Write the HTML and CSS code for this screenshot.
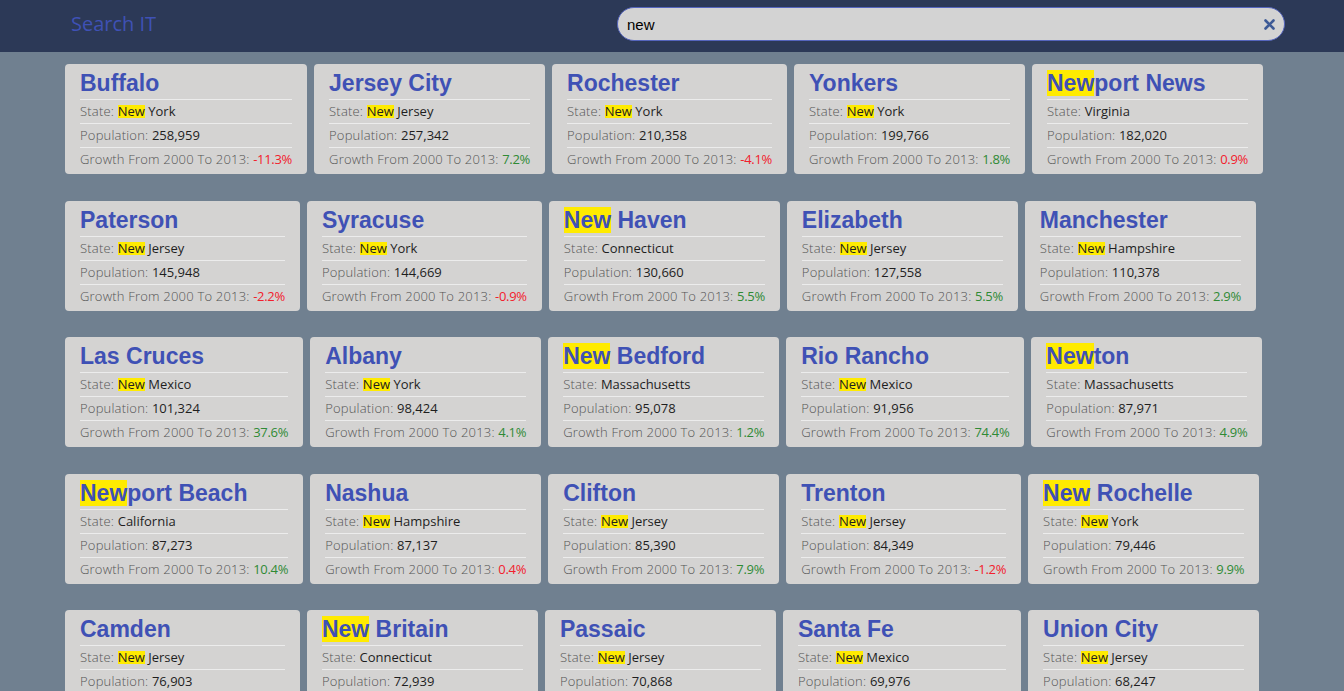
FILE: index.html
```html
<!DOCTYPE html>
<html lang="en">
<head>
<meta charset="utf-8">
<title>Search IT</title>
<link rel="stylesheet" href="styles.css">
</head>
<body>
<header class="topbar">
  <div class="brand">Search IT</div>
  <div class="search">
    <input type="text" value="new" autofocus>
    <button class="clear" type="button" aria-label="Clear">
      <svg width="11" height="11" viewBox="0 0 11 11"><path d="M1.5 1.5 L9.5 9.5 M9.5 1.5 L1.5 9.5" stroke="#3d5a96" stroke-width="2.6" stroke-linecap="round" fill="none"/></svg>
    </button>
  </div>
</header>
<main class="results">
  <div class="card"><h2>Buffalo</h2><div class="row"><span class="label">State: </span><span class="val"><mark class="hl">New</mark> York</span></div><div class="row"><span class="label">Population: </span><span class="val">258,959</span></div><div class="row"><span class="label">Growth From 2000 To 2013: </span><span class="neg">-11.3%</span></div></div>
  <div class="card"><h2>Jersey City</h2><div class="row"><span class="label">State: </span><span class="val"><mark class="hl">New</mark> Jersey</span></div><div class="row"><span class="label">Population: </span><span class="val">257,342</span></div><div class="row"><span class="label">Growth From 2000 To 2013: </span><span class="pos">7.2%</span></div></div>
  <div class="card"><h2>Rochester</h2><div class="row"><span class="label">State: </span><span class="val"><mark class="hl">New</mark> York</span></div><div class="row"><span class="label">Population: </span><span class="val">210,358</span></div><div class="row"><span class="label">Growth From 2000 To 2013: </span><span class="neg">-4.1%</span></div></div>
  <div class="card"><h2>Yonkers</h2><div class="row"><span class="label">State: </span><span class="val"><mark class="hl">New</mark> York</span></div><div class="row"><span class="label">Population: </span><span class="val">199,766</span></div><div class="row"><span class="label">Growth From 2000 To 2013: </span><span class="pos">1.8%</span></div></div>
  <div class="card"><h2><mark class="hh">New</mark>port News</h2><div class="row"><span class="label">State: </span><span class="val">Virginia</span></div><div class="row"><span class="label">Population: </span><span class="val">182,020</span></div><div class="row"><span class="label">Growth From 2000 To 2013: </span><span class="neg">0.9%</span></div></div>

  <div class="card"><h2>Paterson</h2><div class="row"><span class="label">State: </span><span class="val"><mark class="hl">New</mark> Jersey</span></div><div class="row"><span class="label">Population: </span><span class="val">145,948</span></div><div class="row"><span class="label">Growth From 2000 To 2013: </span><span class="neg">-2.2%</span></div></div>
  <div class="card"><h2>Syracuse</h2><div class="row"><span class="label">State: </span><span class="val"><mark class="hl">New</mark> York</span></div><div class="row"><span class="label">Population: </span><span class="val">144,669</span></div><div class="row"><span class="label">Growth From 2000 To 2013: </span><span class="neg">-0.9%</span></div></div>
  <div class="card"><h2><mark class="hh">New</mark> Haven</h2><div class="row"><span class="label">State: </span><span class="val">Connecticut</span></div><div class="row"><span class="label">Population: </span><span class="val">130,660</span></div><div class="row"><span class="label">Growth From 2000 To 2013: </span><span class="pos">5.5%</span></div></div>
  <div class="card"><h2>Elizabeth</h2><div class="row"><span class="label">State: </span><span class="val"><mark class="hl">New</mark> Jersey</span></div><div class="row"><span class="label">Population: </span><span class="val">127,558</span></div><div class="row"><span class="label">Growth From 2000 To 2013: </span><span class="pos">5.5%</span></div></div>
  <div class="card"><h2>Manchester</h2><div class="row"><span class="label">State: </span><span class="val"><mark class="hl">New</mark> Hampshire</span></div><div class="row"><span class="label">Population: </span><span class="val">110,378</span></div><div class="row"><span class="label">Growth From 2000 To 2013: </span><span class="pos">2.9%</span></div></div>

  <div class="card"><h2>Las Cruces</h2><div class="row"><span class="label">State: </span><span class="val"><mark class="hl">New</mark> Mexico</span></div><div class="row"><span class="label">Population: </span><span class="val">101,324</span></div><div class="row"><span class="label">Growth From 2000 To 2013: </span><span class="pos">37.6%</span></div></div>
  <div class="card"><h2>Albany</h2><div class="row"><span class="label">State: </span><span class="val"><mark class="hl">New</mark> York</span></div><div class="row"><span class="label">Population: </span><span class="val">98,424</span></div><div class="row"><span class="label">Growth From 2000 To 2013: </span><span class="pos">4.1%</span></div></div>
  <div class="card"><h2><mark class="hh">New</mark> Bedford</h2><div class="row"><span class="label">State: </span><span class="val">Massachusetts</span></div><div class="row"><span class="label">Population: </span><span class="val">95,078</span></div><div class="row"><span class="label">Growth From 2000 To 2013: </span><span class="pos">1.2%</span></div></div>
  <div class="card"><h2>Rio Rancho</h2><div class="row"><span class="label">State: </span><span class="val"><mark class="hl">New</mark> Mexico</span></div><div class="row"><span class="label">Population: </span><span class="val">91,956</span></div><div class="row"><span class="label">Growth From 2000 To 2013: </span><span class="pos">74.4%</span></div></div>
  <div class="card"><h2><mark class="hh">New</mark>ton</h2><div class="row"><span class="label">State: </span><span class="val">Massachusetts</span></div><div class="row"><span class="label">Population: </span><span class="val">87,971</span></div><div class="row"><span class="label">Growth From 2000 To 2013: </span><span class="pos">4.9%</span></div></div>

  <div class="card"><h2><mark class="hh">New</mark>port Beach</h2><div class="row"><span class="label">State: </span><span class="val">California</span></div><div class="row"><span class="label">Population: </span><span class="val">87,273</span></div><div class="row"><span class="label">Growth From 2000 To 2013: </span><span class="pos">10.4%</span></div></div>
  <div class="card"><h2>Nashua</h2><div class="row"><span class="label">State: </span><span class="val"><mark class="hl">New</mark> Hampshire</span></div><div class="row"><span class="label">Population: </span><span class="val">87,137</span></div><div class="row"><span class="label">Growth From 2000 To 2013: </span><span class="neg">0.4%</span></div></div>
  <div class="card"><h2>Clifton</h2><div class="row"><span class="label">State: </span><span class="val"><mark class="hl">New</mark> Jersey</span></div><div class="row"><span class="label">Population: </span><span class="val">85,390</span></div><div class="row"><span class="label">Growth From 2000 To 2013: </span><span class="pos">7.9%</span></div></div>
  <div class="card"><h2>Trenton</h2><div class="row"><span class="label">State: </span><span class="val"><mark class="hl">New</mark> Jersey</span></div><div class="row"><span class="label">Population: </span><span class="val">84,349</span></div><div class="row"><span class="label">Growth From 2000 To 2013: </span><span class="neg">-1.2%</span></div></div>
  <div class="card"><h2><mark class="hh">New</mark> Rochelle</h2><div class="row"><span class="label">State: </span><span class="val"><mark class="hl">New</mark> York</span></div><div class="row"><span class="label">Population: </span><span class="val">79,446</span></div><div class="row"><span class="label">Growth From 2000 To 2013: </span><span class="pos">9.9%</span></div></div>

  <div class="card"><h2>Camden</h2><div class="row"><span class="label">State: </span><span class="val"><mark class="hl">New</mark> Jersey</span></div><div class="row"><span class="label">Population: </span><span class="val">76,903</span></div><div class="row"><span class="label">Growth From 2000 To 2013: </span><span class="neg">-3.6%</span></div></div>
  <div class="card"><h2><mark class="hh">New</mark> Britain</h2><div class="row"><span class="label">State: </span><span class="val">Connecticut</span></div><div class="row"><span class="label">Population: </span><span class="val">72,939</span></div><div class="row"><span class="label">Growth From 2000 To 2013: </span><span class="pos">1.9%</span></div></div>
  <div class="card"><h2>Passaic</h2><div class="row"><span class="label">State: </span><span class="val"><mark class="hl">New</mark> Jersey</span></div><div class="row"><span class="label">Population: </span><span class="val">70,868</span></div><div class="row"><span class="label">Growth From 2000 To 2013: </span><span class="pos">4.9%</span></div></div>
  <div class="card"><h2>Santa Fe</h2><div class="row"><span class="label">State: </span><span class="val"><mark class="hl">New</mark> Mexico</span></div><div class="row"><span class="label">Population: </span><span class="val">69,976</span></div><div class="row"><span class="label">Growth From 2000 To 2013: </span><span class="pos">10.5%</span></div></div>
  <div class="card"><h2>Union City</h2><div class="row"><span class="label">State: </span><span class="val"><mark class="hl">New</mark> Jersey</span></div><div class="row"><span class="label">Population: </span><span class="val">68,247</span></div><div class="row"><span class="label">Growth From 2000 To 2013: </span><span class="pos">7.4%</span></div></div>
</main>
</body>
</html>
```
FILE: styles.css
```css
html {
  scrollbar-width: none;
}
html::-webkit-scrollbar {
  display: none;
}
body {
  margin: 0;
  background: #708090;
  font-family: "Open Sans", "Liberation Sans", sans-serif;
}

.topbar {
  height: 52px;
  background: #2c3957;
  display: flex;
  align-items: flex-start;
}
.brand {
  margin: 10px 0 0 71px;
  font-size: 20px;
  color: #3f51b5;
}
.search {
  margin: 7px 59px 0 auto;
  width: 668px;
  height: 34px;
  box-sizing: border-box;
  border: 1px solid #5565bd;
  border-radius: 17px;
  background: #d3d3d3;
  display: flex;
  align-items: center;
  padding: 0 9px 0 9px;
}
.search input {
  flex: 1;
  min-width: 0;
  border: 0;
  background: transparent;
  font: 15px "Liberation Sans", Arial, sans-serif;
  color: #000;
  outline: none;
  padding: 0;
}
.clear {
  border: 0;
  background: none;
  padding: 0;
  width: 11px;
  height: 11px;
  display: flex;
  cursor: pointer;
}

.results {
  display: flex;
  flex-wrap: wrap;
  align-items: flex-start;
  column-gap: 7px;
  row-gap: 26.5px;
  width: 1230px;
  margin: 12px 0 0 65px;
}
.card {
  background: #d4d3d2;
  border-radius: 4px;
  padding: 6px 15px 3px;
}
.card h2 {
  margin: 0 0 3px;
  font: bold 23px/26px "Liberation Sans", Arial, sans-serif;
  color: #3f51b5;
  white-space: nowrap;
}
.row {
  border-top: 1px solid #ececec;
  font-size: 13px;
  line-height: 23px;
  white-space: nowrap;
}
.label {
  font-weight: 300;
  color: #555;
  letter-spacing: 0.2px;
}
.val {
  color: #1e1e1e;
}
.pos {
  color: #2f8a35;
  letter-spacing: -0.3px;
}
.neg {
  color: #f2202c;
  letter-spacing: -0.3px;
}
.hh {
  background: #ffeb00;
  color: inherit;
}
.hl {
  background: #ffeb00;
  color: inherit;
  display: inline-block;
  line-height: 13px;
}
```
